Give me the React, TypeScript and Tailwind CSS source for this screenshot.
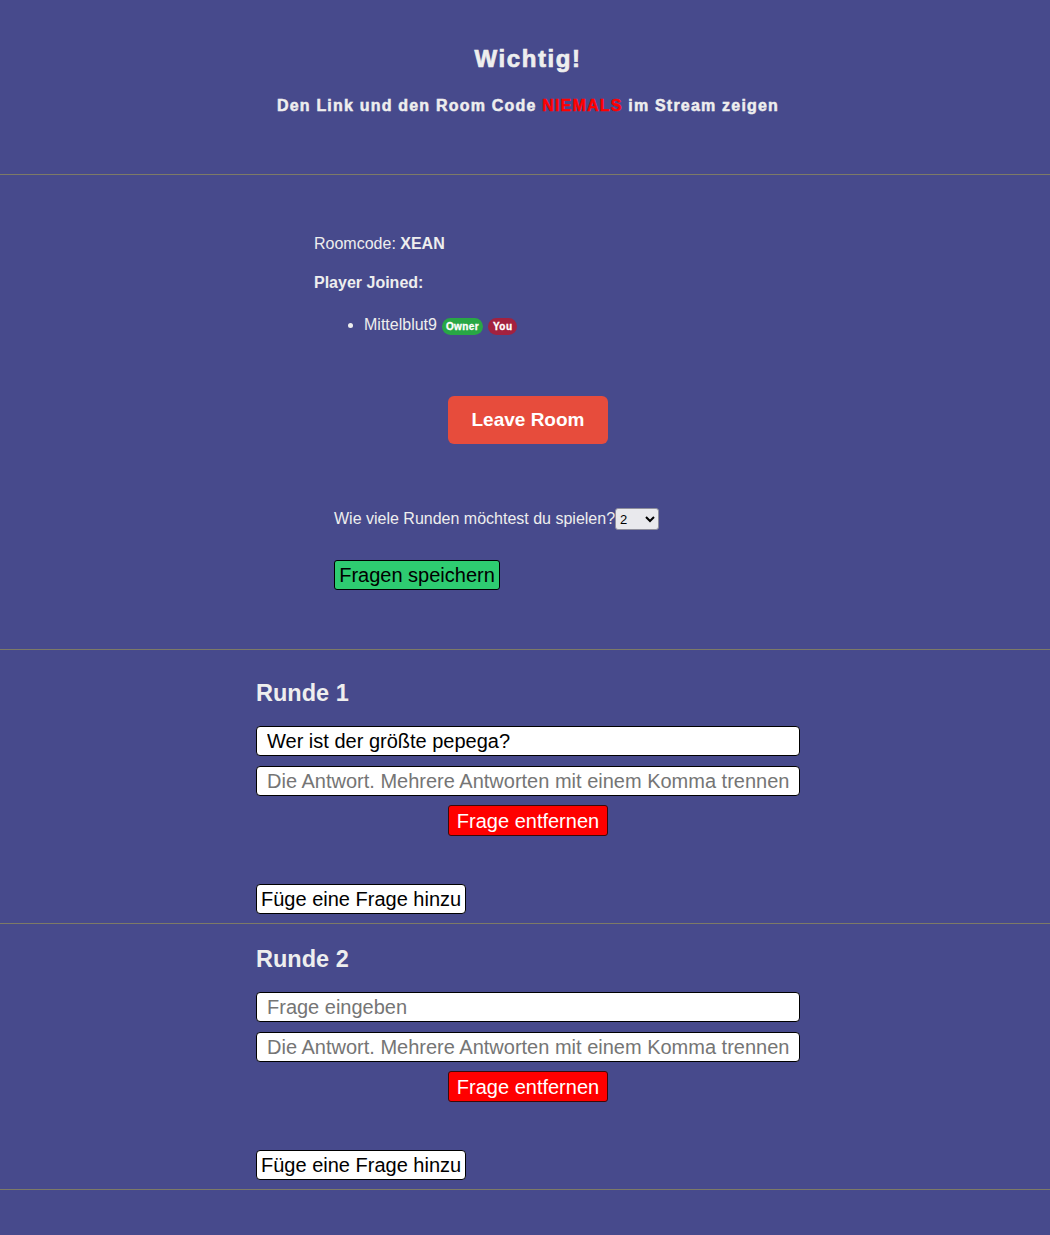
import { useState } from "react";

function Round({ n, question, first }: { n: number; question: string; first?: boolean }) {
	const [q, setQ] = useState(question);
	return (
		<>
			<section className={first ? "pt-[30px]" : "pt-[22px]"}>
				<div className="ml-[256px] w-[544px]">
					<h2 className="text-[23.5px] leading-[26px] font-bold">Runde {n}</h2>
					<input
						value={q}
						onChange={(e) => setQ(e.target.value)}
						placeholder="Frage eingeben"
						className="mt-[20px] block h-[30px] w-full rounded-[4px] border border-black bg-white px-[10px] text-[20px] text-black placeholder:text-[#757575]"
					/>
					<input
						placeholder="Die Antwort. Mehrere Antworten mit einem Komma trennen"
						className="mt-[10px] block h-[30px] w-full rounded-[4px] border border-black bg-white px-[10px] text-[20px] text-black placeholder:text-[#757575]"
					/>
					<div className="mt-[9px] flex justify-center">
						<button className="h-[31px] w-[160px] rounded-[3px] border border-[#3a0a0a] bg-[#ff0000] text-[20px] leading-[24px] text-white">
							Frage entfernen
						</button>
					</div>
					<button className="mt-[48px] mb-[9px] block h-[30px] rounded-[4px] border border-black bg-white px-[4px] text-[20px] leading-[24px] text-black">
						Füge eine Frage hinzu
					</button>
				</div>
			</section>
			<hr className="border-[#7d7a66]" />
		</>
	);
}

export default function App() {
	return (
		<div className="min-h-[1235px] bg-[#474a8c] font-['Liberation_Sans',Arial,sans-serif] text-[#eeeeee]">
			<header className="h-[174px] pt-[44px] pl-[6px] text-center">
				<h1 className="text-[24px] leading-[30px] font-black tracking-[1.6px] [-webkit-text-stroke:0.7px_#eeeeee]">
					Wichtig!
				</h1>
				<p className="mt-[22px] text-[16px] leading-[20px] font-black tracking-[1.2px] [-webkit-text-stroke:0.5px_currentColor]">
					Den Link und den Room Code <span className="text-[#ff0000]">NIEMALS</span> im Stream zeigen
				</p>
			</header>
			<hr className="border-[#7d7a66]" />

			<section className="h-[474px] pt-[59px]">
				<div className="ml-[314px] w-[428px]">
					<p className="text-[16px] leading-[20px]">
						Roomcode: <span className="font-bold">XEAN</span>
					</p>
					<p className="mt-[19px] text-[16px] leading-[20px] font-bold">Player Joined:</p>
					<ul className="mt-[21px] list-disc pl-[50px] text-[16px] leading-[20px]">
						<li>
							<span className="inline-flex items-center gap-[5px]">
								Mittelblut9
								<span className="mt-[4px] rounded-full bg-[#28a745] px-[4px] text-[10px] leading-[17px] font-black tracking-[0.4px] text-white [-webkit-text-stroke:0.3px_#ffffff]">
									Owner
								</span>
								<span className="mt-[4px] rounded-full bg-[#a3213f] px-[5px] text-[10px] leading-[17px] font-black tracking-[0.4px] text-white [-webkit-text-stroke:0.3px_#ffffff]">
									You
								</span>
							</span>
						</li>
					</ul>
					<div className="mt-[61px] flex justify-center">
						<button className="h-[48px] w-[160px] rounded-[6px] bg-[#e74c3c] text-[19px] font-bold text-white">
							Leave Room
						</button>
					</div>
					<div className="mt-[64px] ml-[20px] flex items-center text-[16px] leading-[20px]">
						<span>Wie viele Runden möchtest du spielen?</span>
						<select
							defaultValue="2"
							className="h-[22px] w-[44px] rounded-[3px] border border-[#8f8f9d] bg-[#e9e9ed] text-[13px] text-black"
						>
							<option value="1">1</option>
							<option value="2">2</option>
							<option value="3">3</option>
						</select>
					</div>
					<button className="mt-[30px] ml-[20px] block h-[30px] w-[166px] rounded-[3px] border border-black bg-[#2ecc71] text-[20px] leading-[24px] text-black">
						Fragen speichern
					</button>
				</div>
			</section>
			<hr className="border-[#7d7a66]" />

			<Round n={1} question="Wer ist der größte pepega?" first />
			<Round n={2} question="" />
		</div>
	);
}
